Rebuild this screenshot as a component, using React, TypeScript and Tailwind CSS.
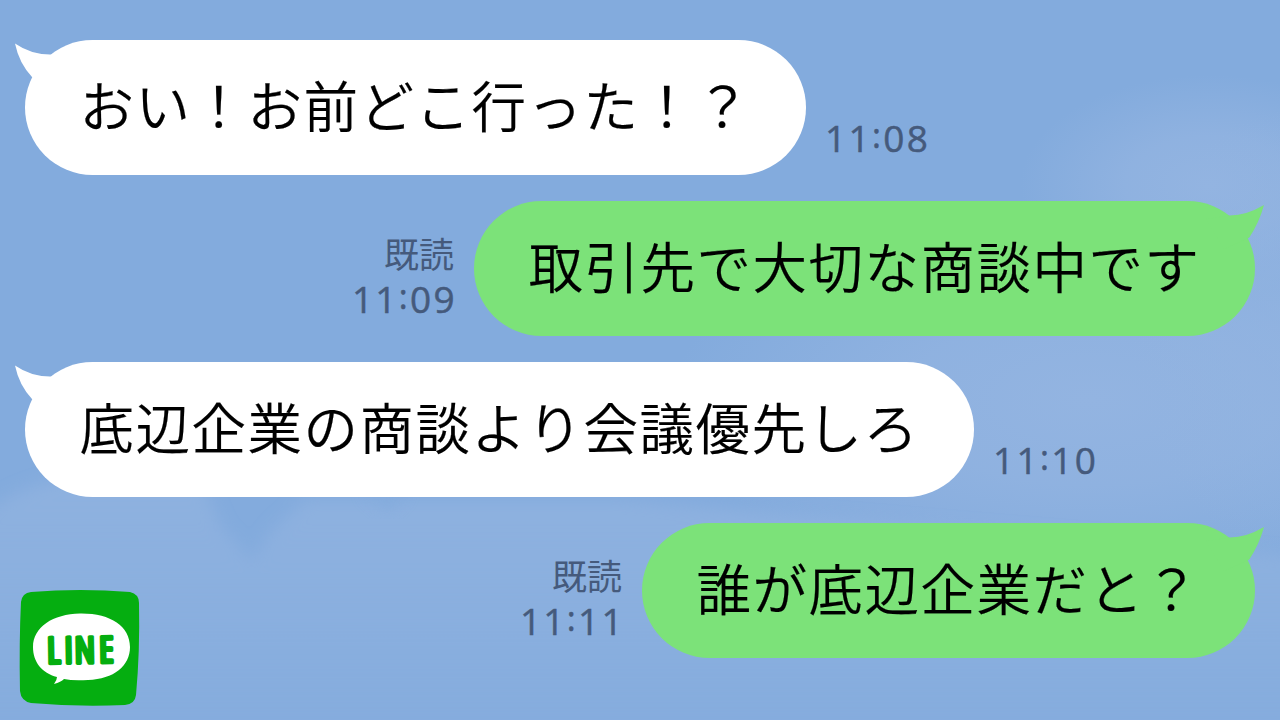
import React from 'react';

interface Message {
  text: string;
  time: string;
  mine: boolean;
}

const messages: Message[] = [
  { text: 'おい！お前どこ行った！？', time: '11:08', mine: false },
  { text: '取引先で大切な商談中です', time: '11:09', mine: true },
  { text: '底辺企業の商談より会議優先しろ', time: '11:10', mine: false },
  { text: '誰が底辺企業だと？', time: '11:11', mine: true },
];

const Wallpaper: React.FC = () => (
  <svg className="absolute inset-0 w-full h-full" viewBox="0 0 1280 720" preserveAspectRatio="none">
    <defs>
      <filter id="edge" x="-30%" y="-30%" width="160%" height="160%">
        <feGaussianBlur stdDeviation="8" />
      </filter>
      <radialGradient id="puff">
        <stop offset="0%" stopColor="#93b4e1" />
        <stop offset="45%" stopColor="#93b4e1" stopOpacity="0.75" />
        <stop offset="100%" stopColor="#93b4e1" stopOpacity="0" />
      </radialGradient>
      <linearGradient id="bank" x1="0" y1="0" x2="0" y2="1">
        <stop offset="0%" stopColor="#91b3e0" stopOpacity="0.8" />
        <stop offset="35%" stopColor="#91b3e0" stopOpacity="0.6" />
        <stop offset="100%" stopColor="#91b3e0" stopOpacity="0.1" />
      </linearGradient>
    </defs>
    <rect width="1280" height="720" fill="#83abdd" />
    <ellipse cx="1210" cy="185" rx="190" ry="110" fill="url(#puff)" />
    <ellipse cx="1090" cy="400" rx="420" ry="190" fill="url(#puff)" />
    <ellipse cx="1290" cy="330" rx="160" ry="220" fill="url(#puff)" opacity="0.6" />
    <path
      d="M-40 530 Q20 480 80 478 H200 L222 528 L252 560 L272 530 L305 500 H620 L1340 560 V740 H-40 Z"
      fill="url(#bank)"
      filter="url(#edge)"
    />
    <path d="M362 490 H408 L388 512 Z" fill="#83abdd" filter="url(#edge)" opacity="0.8" />
  </svg>
);

const Time: React.FC<{ value: string }> = ({ value }) => {
  const [h, m] = value.split(':');
  return (
    <span className="flex -mr-0.5 font-['Open_Sans',sans-serif] text-[37px] leading-[45px] tracking-[2.3px] [-webkit-text-stroke:0.5px_#455a7c]">
      {h}
      <span className="relative -top-[2px] text-[34px]">:</span>
      {m}
    </span>
  );
};

const Tail: React.FC<{ mine: boolean }> = ({ mine }) => (
  <svg
    className={mine ? 'absolute top-0 -right-[9px] -scale-x-100 text-[#7ce279]' : 'absolute top-0 -left-[10px] text-white'}
    width="60"
    height="50"
    viewBox="0 0 60 50"
  >
    <path
      d={
        mine
          ? 'M0 4 Q18 14.5 34 14.5 L58 18 L40 48 L14.7 36.5 Q5 22 0 4 Z'
          : 'M0 3.5 Q16 14.5 35 14.5 L58 18 L40 48 L17 37 Q4 23 0 3.5 Z'
      }
      fill="currentColor"
    />
  </svg>
);

const Bubble: React.FC<{ message: Message }> = ({ message }) => (
  <div
    className={
      message.mine
        ? 'relative h-[135px] px-[54.5px] rounded-full flex items-center bg-[#7ce279]'
        : 'relative h-[135px] px-[54.5px] rounded-full flex items-center bg-white'
    }
  >
    <Tail mine={message.mine} />
    <span className="relative -top-[3.5px] text-[54.5px] tracking-[1.5px] leading-none font-[350] [font-kerning:none] [-webkit-text-stroke:0.2px_#000] text-black whitespace-nowrap">
      {message.text}
    </span>
  </div>
);

const Logo: React.FC = () => (
  <svg className="absolute left-[18px] bottom-[12px]" width="124" height="120" viewBox="0 0 124 120">
    <path
      d="M13 4 Q62 0 112 4 Q121 6 121 15 Q122 64 118 107 Q117 116 107 117 Q58 119 13 115 Q3 113 2 103 Q1 54 3 14 Q4 5 13 4 Z"
      fill="#05ae10"
    />
    <path
      d="M62 25.500 C92 25 112 38 112 59 C112 78 96 91 70 92 Q55 93 46 91 Q43 94 36 96 Q39 92 39 89 C24 85 15 74 15 59 C15 39 35 26 62 25.500 Z"
      fill="#fff"
    />
    <text
      x="29 46.5 56.5 81"
      y="75"
      transform="rotate(-1 64 60)"
      fill="#05ae10"
      stroke="#05ae10"
      strokeWidth="3.5"
      strokeLinejoin="round"
      fontSize="36.5"
      fontFamily="Open Sans, sans-serif"
      className="[font-stretch:84%]"
    >
      LINE
    </text>
  </svg>
);

const App: React.FC = () => {
  return (
    <div className="relative w-[1280px] h-[720px] overflow-hidden font-['Noto_Sans_CJK_JP',sans-serif]" lang="ja">
      <Wallpaper />
      <div className="relative flex flex-col gap-[26px] pt-10 px-[25px]">
        {messages.map((m) =>
          m.mine ? (
            <div key={m.time} className="flex justify-end items-end gap-[19px]">
              <div className="flex flex-col items-end pb-[15px] text-[#455a7c]">
                <span className="text-[35px] leading-[45px] pr-px pb-px">既読</span>
                <Time value={m.time} />
              </div>
              <Bubble message={m} />
            </div>
          ) : (
            <div key={m.time} className="flex items-end gap-[19px]">
              <Bubble message={m} />
              <div className="pb-[15px] text-[#455a7c]">
                <Time value={m.time} />
              </div>
            </div>
          )
        )}
      </div>
      <Logo />
    </div>
  );
};

export default App;
